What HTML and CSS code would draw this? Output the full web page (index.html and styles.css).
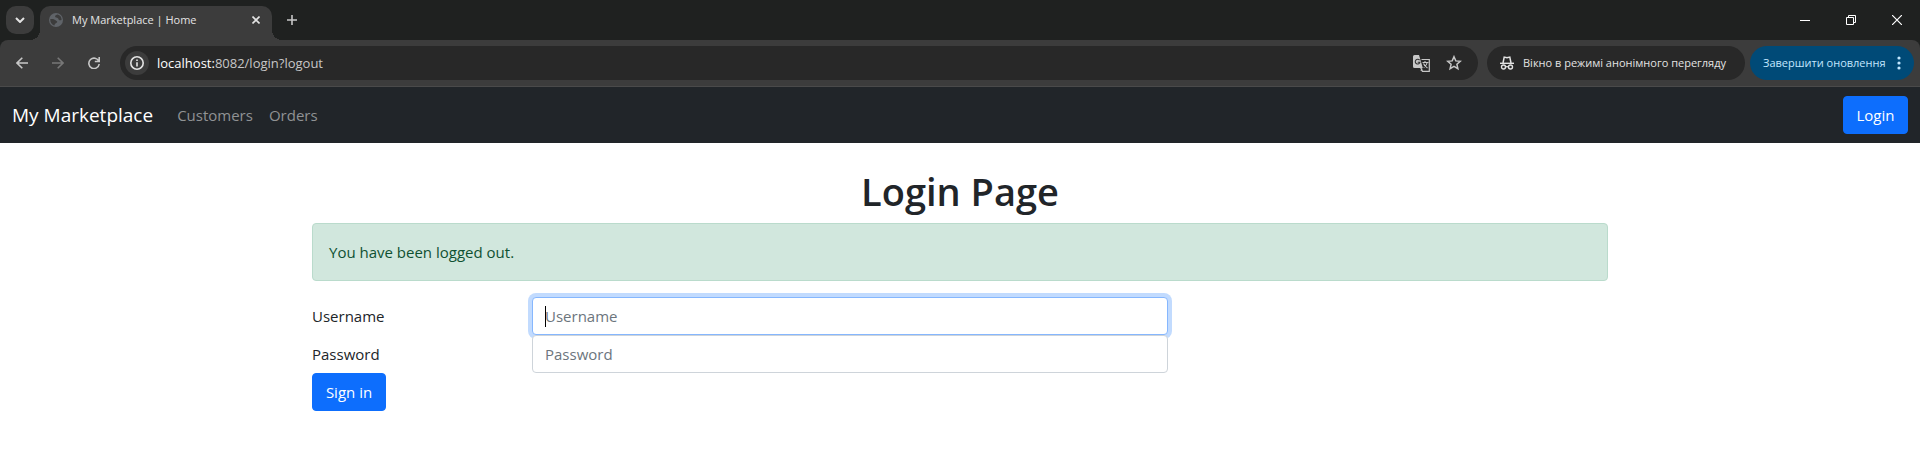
FILE: index.html
```
<!DOCTYPE html>
<html lang="en">
<head>
<meta charset="utf-8">
<meta name="viewport" content="width=device-width, initial-scale=1">
<title>My Marketplace | Home</title>
<link rel="stylesheet" href="styles.css">
</head>
<body>
<div class="browser" lang="uk">
  <div class="tabstrip">
    <button class="tab-search" type="button" aria-label="Tabs">
      <svg width="10" height="6" viewBox="0 0 10 6"><path d="M1 1l4 4 4-4" fill="none" stroke="#e3e3e3" stroke-width="2"/></svg>
    </button>
    <div class="tab">
      <svg width="14" height="14" viewBox="0 0 14 14"><circle cx="7" cy="7" r="7" fill="#5f6368"/><path d="M1.3 6.1C3 5.600 5.400 6 6.200 7c.7 1 2.200.7 2 2.100-.1 1-1.700 1-2.400 2.200-.3.6-.2 1.200-.7 1.300C2.600 11.800 1 9 1.300 6.100zM8.600 1.600c-1 .6-2.500.5-2.500 1.900 0 1.300 1.900 1 2.800 1.700.8.7.6 1.800 1.700 2 .8.100 1.400-.4 2-.3C12.700 4.300 11 2.100 8.600 1.600z" fill="#3c3c3c"/></svg>
      <span class="tab-title">My Marketplace | Home</span>
      <button class="plain" type="button" aria-label="Close tab">
        <svg width="8" height="8" viewBox="0 0 8 8"><path d="M.5.5l7 7M7.500.5l-7 7" stroke="#e3e3e3" stroke-width="1.600"/></svg>
      </button>
    </div>
    <button class="plain new-tab" type="button" aria-label="New tab">
      <svg width="10" height="10" viewBox="0 0 10 10"><path d="M5 0v10M0 5h10" stroke="#c7c7c7" stroke-width="1.600"/></svg>
    </button>
    <div class="window-controls">
      <button class="plain" type="button" aria-label="Minimize"><svg width="10" height="10" viewBox="0 0 10 10"><path d="M0 5.500h10" stroke="#fff"/></svg></button>
      <button class="plain" type="button" aria-label="Restore"><svg width="10" height="10" viewBox="0 0 10 10"><path d="M.5 2.500h7v7h-7zM2.500 2.500v-2h7v7h-2" fill="none" stroke="#fff"/></svg></button>
      <button class="plain" type="button" aria-label="Close"><svg width="10" height="10" viewBox="0 0 10 10"><path d="M0 0l10 10M10 0L0 10" stroke="#fff" stroke-width="1.200"/></svg></button>
    </div>
  </div>
  <div class="toolbar">
    <div class="history">
      <button class="plain" type="button" aria-label="Back"><svg width="12" height="12" viewBox="0 0 12 12"><path d="M12 6H1.200M6.300.7L1 6l5.300 5.300" fill="none" stroke="#c7c7c7" stroke-width="1.600"/></svg></button>
      <button class="plain" type="button" aria-label="Forward"><svg width="12" height="12" viewBox="0 0 12 12"><path d="M0 6h10.800M5.700.7L11 6l-5.300 5.300" fill="none" stroke="#777" stroke-width="1.600"/></svg></button>
      <button class="plain" type="button" aria-label="Reload"><svg width="12" height="12" viewBox="0 0 12 12"><path d="M10.800 4.200A5.200 5.200 0 1 0 11.200 7M11.200 0v4.500H6.800" fill="none" stroke="#c7c7c7" stroke-width="1.600"/></svg></button>
    </div>
    <div class="omnibox">
      <button class="plain site-info" type="button" aria-label="Site information"><svg width="14" height="14" viewBox="0 0 14 14"><circle cx="7" cy="7" r="6.200" fill="none" stroke="#e3e3e3" stroke-width="1.600"/><path d="M7 6.200v4.300M7 3.400v1.600" stroke="#e3e3e3" stroke-width="1.600"/></svg></button>
      <div class="url"><span class="host">localhost:</span>8082/login?logout</div>
      <button class="plain" type="button" aria-label="Translate"><svg width="17" height="17" viewBox="0 0 17 17"><path d="M8.500 4.500h7.800v11.800H9.500l-1.800-3.500" fill="none" stroke="#c7c7c7" stroke-width="1.200"/><path d="M1.500 0H6l3.800 13H1.500A1.500 1.500 0 0 1 0 11.500v-10A1.500 1.500 0 0 1 1.500 0z" fill="#c7c7c7"/><path d="M6.600 5.200A2.400 2.400 0 1 0 7 7.200H4.700" fill="none" stroke="#333" stroke-width="1.100"/><path d="M9.500 7.500h6M12 6v1.500M14.200 7.500c-.5 2.500-2 4-3.500 5M10.500 8.500c1 2.200 2.500 3.500 4 4.500M9 13.500l-1 2.500" fill="none" stroke="#c7c7c7" stroke-width="1.100"/></svg></button>
      <button class="plain" type="button" aria-label="Bookmark"><svg width="16" height="16" viewBox="0 0 16 16"><path d="M8 1.700l1.800 4.200 4.500.4-3.400 3 1 4.400L8 11.400l-3.900 2.300 1-4.400-3.400-3 4.500-.4z" fill="none" stroke="#c7c7c7" stroke-width="1.500"/></svg></button>
    </div>
    <button class="chip" type="button">
      <svg width="14" height="14" viewBox="0 0 14 14"><path d="M0 7.300h14" stroke="#e3e3e3" stroke-width="1.400"/><path d="M3 7l1.200-5.900L7 1.800l2.800-.7L11 7" fill="none" stroke="#e3e3e3" stroke-width="1.500"/><circle cx="3.500" cy="11" r="2" fill="none" stroke="#e3e3e3" stroke-width="1.400"/><circle cx="10.500" cy="11" r="2" fill="none" stroke="#e3e3e3" stroke-width="1.400"/><path d="M5.500 10.700h3" stroke="#e3e3e3" stroke-width="1.200"/></svg>
      <span>Вікно в режимі анонімного перегляду</span>
    </button>
    <button class="chip update" type="button">
      <span>Завершити оновлення</span>
      <svg width="4" height="14" viewBox="0 0 4 14"><circle cx="2" cy="2" r="1.600" fill="#c2e7ff"/><circle cx="2" cy="7" r="1.600" fill="#c2e7ff"/><circle cx="2" cy="12" r="1.600" fill="#c2e7ff"/></svg>
    </button>
  </div>
</div>
<nav class="navbar">
  <a class="brand" href="#">My Marketplace</a>
  <a class="nav-link" href="#">Customers</a>
  <a class="nav-link" href="#">Orders</a>
  <button class="btn login" type="button">Login</button>
</nav>
<main class="container">
  <h1>Login Page</h1>
  <div class="alert" role="alert">You have been logged out.</div>
  <form>
    <div class="row">
      <label for="username">Username</label>
      <div class="field focused">
        <input id="username" type="text" placeholder="Username">
        <span class="caret"></span>
      </div>
    </div>
    <div class="row">
      <label for="password">Password</label>
      <div class="field"><input id="password" type="password" placeholder="Password"></div>
    </div>
    <button class="btn sign-in" type="submit">Sign in</button>
  </form>
</main>
</body>
</html>
```
FILE: styles.css
```
* { box-sizing: border-box; }
body {
  margin: 0;
  background: #fff;
  color: #212529;
  font: 15px/24px "Open Sans", "Noto Sans", sans-serif;
}
svg { display: block; flex: none; }
button { font: inherit; cursor: pointer; }
a { text-decoration: none; }
.plain {
  display: flex;
  align-items: center;
  justify-content: center;
  padding: 0;
  border: 0;
  background: none;
}

/* Browser frame */
.browser { background: #1f2120; font-size: 12px; line-height: 16px; }
.tabstrip { display: flex; height: 40px; padding: 6px 0 0 6px; }
.tab-search {
  display: flex;
  align-items: center;
  justify-content: center;
  width: 28px;
  height: 28px;
  margin-right: 6px;
  padding: 0;
  border: 0;
  border-radius: 10px;
  background: #3c3c3c;
}
.tab {
  position: relative;
  display: flex;
  align-items: center;
  width: 232px;
  padding: 0 12px 6px 9px;
  border-radius: 10px 10px 0 0;
  background: #3c3c3c;
}
.tab::before, .tab::after {
  content: "";
  position: absolute;
  bottom: 0;
  width: 10px;
  height: 10px;
}
.tab::before { right: 100%; background: radial-gradient(circle at 0 0, transparent 10px, #3c3c3c 10px); }
.tab::after { left: 100%; background: radial-gradient(circle at 100% 0, transparent 10px, #3c3c3c 10px); }
.tab-title { flex: 1; margin-left: 9px; color: #e3e3e3; font-size: 11px; white-space: nowrap; }
.new-tab { width: 40px; height: 28px; }
.window-controls { display: flex; margin-left: auto; height: 28px; }
.window-controls .plain { width: 46px; }
.toolbar {
  display: flex;
  align-items: center;
  height: 47px;
  padding: 0 6px 0 4px;
  border-bottom: 1px solid #4a4a4a;
  border-radius: 8px 8px 0 0;
  background: #3c3c3c;
}
.history { display: flex; margin-right: 8px; }
.history .plain { width: 36px; height: 34px; }
.omnibox {
  flex: 1;
  display: flex;
  align-items: center;
  gap: 16px;
  height: 34px;
  margin-right: 9px;
  padding: 0 16px 0 5px;
  border-radius: 17px;
  background: #282828;
}
.site-info { width: 24px; height: 24px; margin-right: -8px; border-radius: 50%; background: #3c3c3c; }
.url { flex: 1; color: #c7c7c7; font-size: 13px; }
.host { color: #fff; }
.chip {
  display: flex;
  align-items: center;
  gap: 9px;
  width: 258px;
  height: 34px;
  padding: 0 13px;
  border: 0;
  border-radius: 17px;
  background: #282828;
  color: #e3e3e3;
  font-size: 11px;
  white-space: nowrap;
}
.update { justify-content: space-between; width: 164px; margin-left: 5px; background: #004a77; color: #c2e7ff; }

/* Site navigation */
.navbar {
  display: flex;
  align-items: center;
  gap: 16px;
  min-height: 56px;
  padding: 8px 12px;
  background: #212529;
}
.brand { margin-right: 8px; color: #fff; font-size: 19px; line-height: 30px; }
.nav-link { color: #909294; }
.btn {
  padding: 6px 12px;
  border: 1px solid #0d6efd;
  border-radius: 4px;
  background: #0d6efd;
  color: #fff;
}
.login { min-width: 65px; margin-left: auto; }
.sign-in { min-width: 74px; }

/* Login form */
.container { max-width: 1320px; margin: 0 auto; padding: 24px 12px; }
h1 { margin: 0 0 8px; font-size: 38px; font-weight: 600; line-height: 48px; text-align: center; }
.alert {
  margin-bottom: 16px;
  padding: 16px;
  border: 1px solid #badbcc;
  border-radius: 4px;
  background: #d1e7dd;
  color: #0f5132;
}
.row { display: grid; grid-template-columns: repeat(12, 1fr); column-gap: 24px; align-items: center; }
.row label { grid-column: span 2; }
.field { position: relative; grid-column: span 6; }
.field input {
  display: block;
  width: 100%;
  height: 38px;
  padding: 6px 12px;
  border: 1px solid #ced4da;
  border-radius: 4px;
  outline: 0;
  background: #fff;
  color: #212529;
  font: inherit;
}
.field input::placeholder { color: #6c757d; opacity: 1; }
.focused input { border-color: #86b7fe; box-shadow: 0 0 0 4px #c2dbfe; }
.caret { position: absolute; top: 9px; left: 13px; width: 1px; height: 21px; background: #000; }
```
